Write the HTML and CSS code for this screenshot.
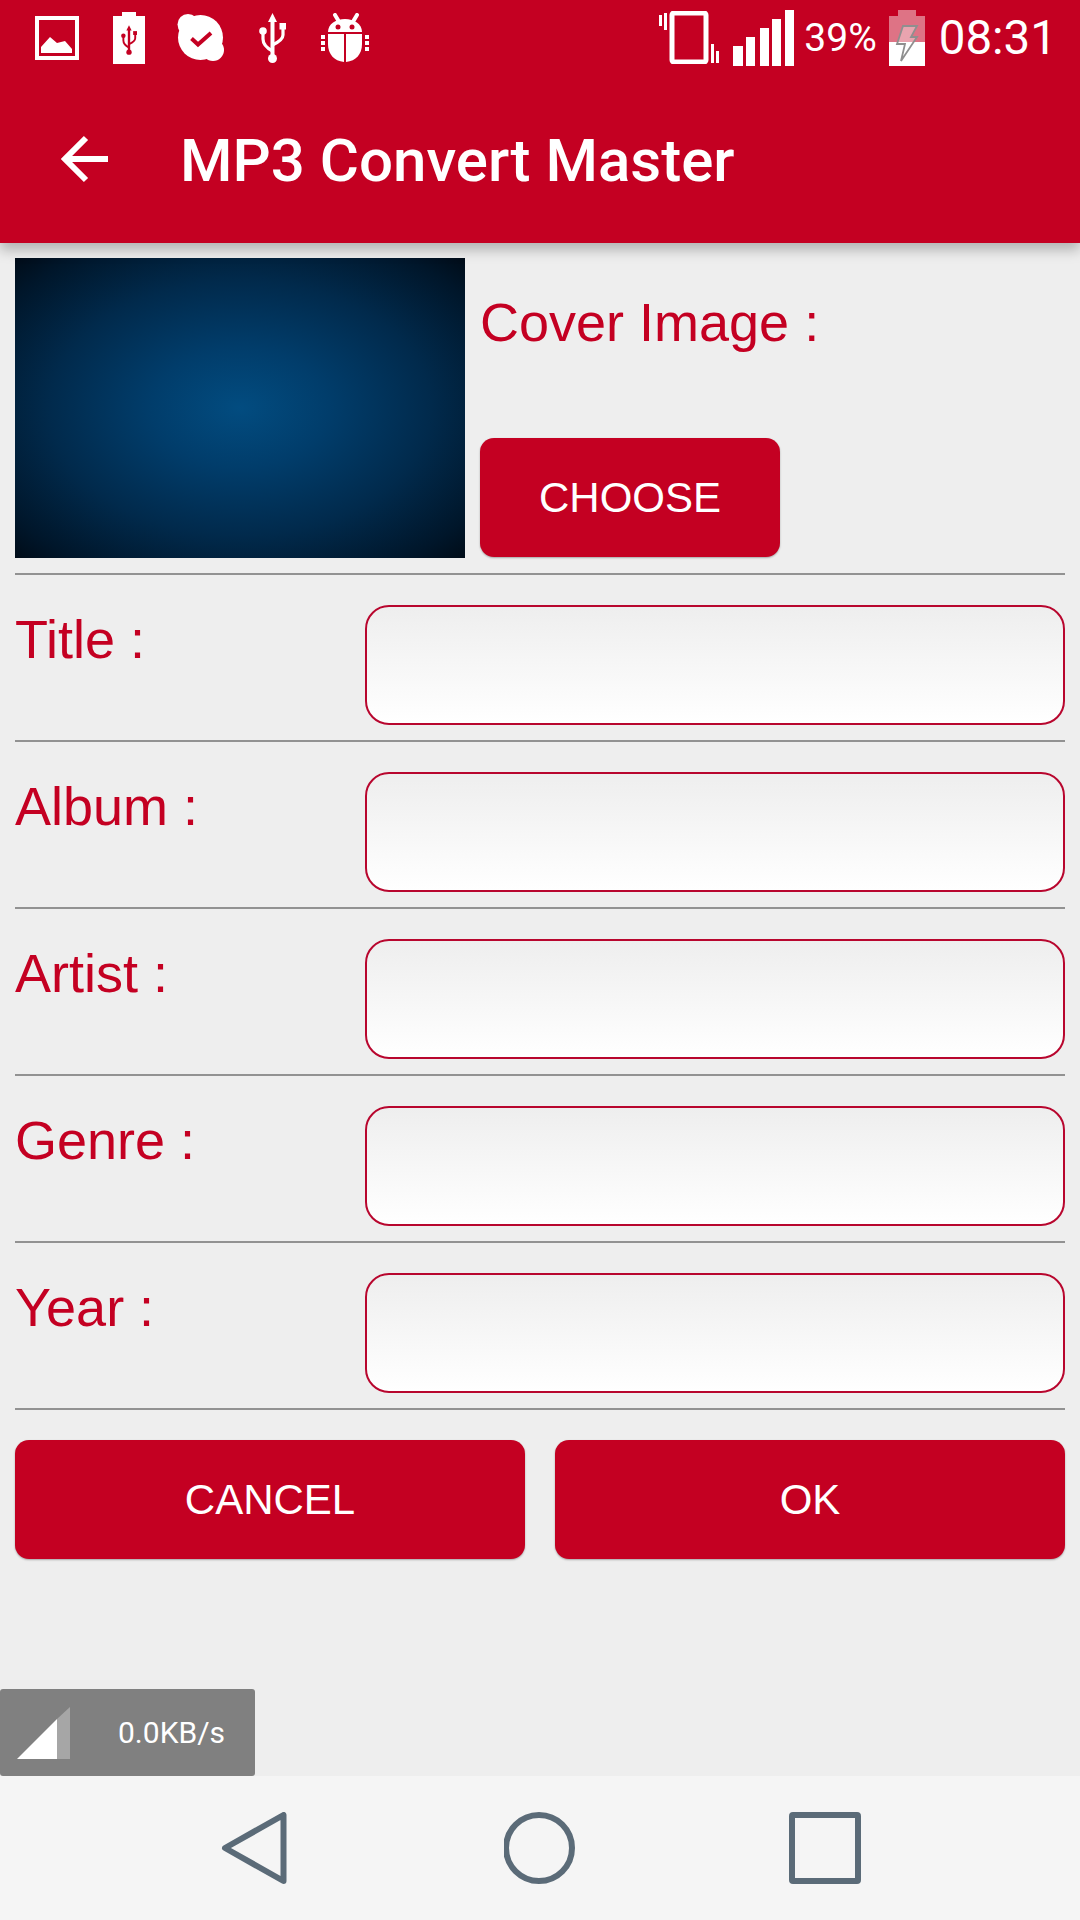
FILE: index.html
```html
<!DOCTYPE html>
<html>
<head>
    <title>MP3 Convert Master</title>
    <link rel="stylesheet" href="styles.css">
</head>
<body>
    <svg class="defs" width="0" height="0">
        <symbol id="usb" viewBox="0 0 27 50">
            <path d="M13.5 0L18 9H15.500V46H11.500V9H9Z" fill="currentColor"/>
            <circle cx="13.5" cy="45.5" r="4.5" fill="currentColor"/>
            <circle cx="4" cy="18" r="3.8" fill="currentColor"/>
            <rect x="20.500" y="10" width="6.500" height="6.500" fill="currentColor"/>
            <path d="M4 18V26Q4 33 13.5 38M24 14V22Q24 27 13.5 32" fill="none" stroke="currentColor" stroke-width="3.200"/>
        </symbol>
    </svg>

    <!-- Status bar and toolbar -->
    <header class="app-head">
        <div class="status-bar">
            <div class="status-left">
                <svg class="ic-image" viewBox="0 0 44 44">
                    <rect x="2" y="2" width="40" height="40" fill="none" stroke="#fff" stroke-width="4"/>
                    <path d="M6 37V31L15 21L22 27L30 25L37 33V37Z" fill="#fff"/>
                </svg>
                <svg class="ic-usb-battery" viewBox="0 0 32 52">
                    <rect x="9" y="0" width="14" height="5" fill="#fff"/>
                    <rect x="0" y="4" width="32" height="48" fill="#fff"/>
                    <use href="#usb" x="8" y="12" width="16" height="32" color="#c40022"/>
                </svg>
                <svg class="ic-skype" viewBox="0 0 47 47">
                    <circle cx="23.500" cy="23.500" r="22.500" fill="#fff"/>
                    <circle cx="11" cy="10.500" r="10.500" fill="#fff"/>
                    <circle cx="36" cy="36" r="11" fill="#fff"/>
                    <path d="M14.5 24.500L21 30.500L34 19" fill="none" stroke="#c40022" stroke-width="4"/>
                </svg>
                <svg class="ic-usb"><use href="#usb" width="27" height="50" color="#fff"/></svg>
                <svg class="ic-bug" viewBox="0 0 48 49">
                    <path d="M14 2L20 12M36 2L30 12" stroke="#fff" stroke-width="4" stroke-linecap="round"/>
                    <path d="M7 19C7 11 15 6 24 6C33 6 41 11 41 19Z" fill="#fff"/>
                    <circle cx="17" cy="14" r="2.500" fill="#c40022"/>
                    <circle cx="31" cy="14" r="2.500" fill="#c40022"/>
                    <path d="M7 21H23V49C13 48 7 41 7 31Z" fill="#fff"/>
                    <path d="M41 21H25V49C35 48 41 41 41 31Z" fill="#fff"/>
                    <path d="M0 22H4V26H0ZM0 28H4V32H0ZM0 34H4V38H0ZM44 22H48V26H44ZM44 28H48V32H44ZM44 34H48V38H44Z" fill="#fff"/>
                </svg>
            </div>
            <div class="status-right">
                <svg class="ic-vibrate" viewBox="0 0 60 53">
                    <rect x="13" y="2" width="34" height="49" rx="2" fill="none" stroke="#fff" stroke-width="5"/>
                    <path d="M0 4H3V15H0ZM5 2H8V19H5ZM52 33H55V52H52ZM57 40H60V52H57Z" fill="#fff"/>
                </svg>
                <svg class="ic-signal" viewBox="0 0 61 56">
                    <path d="M0 36H10V56H0ZM13 27H22V56H13ZM27 18H36V56H27ZM39 9H48V56H39ZM52 0H61V56H52Z" fill="#fff"/>
                </svg>
                <span class="battery-text">39%</span>
                <svg class="ic-battery" viewBox="0 0 36 56">
                    <path d="M9 0H27V6H36V32H0V6H9Z" fill="#fff" fill-opacity="0.45"/>
                    <rect x="0" y="32" width="36" height="24" fill="#fff"/>
                    <path d="M14 16H28L22 27H28L12 51L16 34H8Z" fill="#fff" fill-opacity="0.35" stroke="#8f8f8f" stroke-width="1.800"/>
                </svg>
                <span class="clock">08:31</span>
            </div>
        </div>
        <div class="toolbar">
            <svg class="ic-back" viewBox="0 0 47 48">
                <path d="M47 24H5M25 3L4 24L25 45" fill="none" stroke="#fff" stroke-width="6"/>
            </svg>
            <h1 class="app-title">MP3 Convert Master</h1>
        </div>
    </header>

    <!-- Tag form -->
    <main class="tag-form">
        <div class="cover-row">
            <div class="cover-image"></div>
            <div class="cover-side">
                <div class="cover-label">Cover Image :</div>
                <button class="red-btn choose-btn">CHOOSE</button>
            </div>
        </div>
        <div class="field-row">
            <label class="field-label">Title :</label>
            <div class="field-input"></div>
        </div>
        <div class="field-row">
            <label class="field-label">Album :</label>
            <div class="field-input"></div>
        </div>
        <div class="field-row">
            <label class="field-label">Artist :</label>
            <div class="field-input"></div>
        </div>
        <div class="field-row">
            <label class="field-label">Genre :</label>
            <div class="field-input"></div>
        </div>
        <div class="field-row">
            <label class="field-label">Year :</label>
            <div class="field-input"></div>
        </div>
        <div class="action-row">
            <button class="red-btn action-btn">CANCEL</button>
            <button class="red-btn action-btn">OK</button>
        </div>
    </main>

    <!-- Net speed overlay -->
    <div class="net-speed">
        <svg class="ic-net" viewBox="0 0 53 52">
            <path d="M40 12V52H53V0Z" fill="#fff" fill-opacity="0.3"/>
            <path d="M0 52H40V12Z" fill="#fff"/>
        </svg>
        <span class="net-text">0.0KB/s</span>
    </div>

    <!-- Android navigation bar -->
    <nav class="nav-bar">
        <svg class="nav-icon" viewBox="0 0 72 72">
            <path d="M64.500 3V69L6 36Z" fill="none" stroke="#5b6b78" stroke-width="6" stroke-linejoin="round"/>
        </svg>
        <svg class="nav-icon" viewBox="0 0 72 72">
            <circle cx="35" cy="36" r="33" fill="none" stroke="#5b6b78" stroke-width="6"/>
        </svg>
        <svg class="nav-icon" viewBox="0 0 72 72">
            <rect x="3" y="3" width="66" height="66" rx="1" fill="none" stroke="#5b6b78" stroke-width="6" stroke-linejoin="round"/>
        </svg>
    </nav>
</body>
</html>
```

FILE: styles.css
```css
html, body {
    margin: 0;
    padding: 0;
}

body {
    position: relative;
    display: flex;
    flex-direction: column;
    width: 1080px;
    height: 1920px;
    overflow: hidden;
    background-color: #eeeeee;
    font-family: "Liberation Sans", Arial, sans-serif;
}

.defs {
    position: absolute;
}

svg {
    display: block;
    flex: none;
}

/* Header */
.app-head {
    position: relative;
    z-index: 1;
    height: 243px;
    background-color: #c40022;
    box-shadow: 0 7px 12px rgba(0,0,0,0.25);
    font-family: Roboto, sans-serif;
    color: #fff;
}

.status-bar {
    display: flex;
    justify-content: space-between;
    align-items: center;
    height: 75px;
    padding: 0 23px 0 35px;
}

.status-left, .status-right {
    display: flex;
    align-items: center;
}

.ic-image { width: 44px; height: 44px; margin-right: 34px; margin-top: 1px; }
.ic-usb-battery { width: 32px; height: 52px; margin-right: 32px; }
.ic-skype { width: 47px; height: 47px; margin-right: 35px; }
.ic-usb { width: 27px; height: 50px; margin-right: 35px; }
.ic-bug { width: 48px; height: 49px; }

.ic-vibrate { width: 60px; height: 53px; margin-right: 14px; }
.ic-signal { width: 61px; height: 56px; margin-right: 10px; }
.ic-battery { width: 36px; height: 56px; margin: 0 14px 0 12px; }

.battery-text {
    font-size: 39px;
}

.clock {
    font-size: 47.5px;
}

.toolbar {
    display: flex;
    align-items: center;
    height: 168px;
    padding-left: 61px;
}

.ic-back {
    width: 47px;
    height: 48px;
    margin-right: 72px;
}

.app-title {
    margin: 2px 0 0;
    font-size: 60px;
    font-weight: 500;
}

/* Form */
.tag-form {
    padding: 15px 15px 0;
}

.cover-row {
    display: flex;
    height: 300px;
    padding-bottom: 15px;
    border-bottom: 2px solid #929292;
}

.cover-image {
    width: 450px;
    background: radial-gradient(ellipse at center, #024c80 0%, #013d6b 28%, #012a4c 60%, #00162a 88%, #000c18 100%);
}

.cover-side {
    display: flex;
    flex-direction: column;
    align-items: flex-start;
    justify-content: space-between;
    margin-left: 15px;
}

.cover-label, .field-label {
    font-size: 54px;
    color: #c40022;
}

.cover-label {
    margin-top: 33px;
}

.red-btn {
    padding: 0;
    border: none;
    border-radius: 14px;
    background-color: #c40022;
    box-shadow: 0 1px 2px rgba(0,0,0,0.3);
    font-family: "Liberation Sans", Arial, sans-serif;
    font-size: 42px;
    color: #fff;
}

.choose-btn {
    width: 300px;
    height: 119px;
    margin-bottom: 1px;
}

.field-row {
    display: flex;
    padding: 30px 0 15px;
    border-bottom: 2px solid #929292;
}

.field-label {
    width: 350px;
    margin-top: 3px;
}

.field-input {
    flex: 1;
    box-sizing: border-box;
    height: 120px;
    border: 2.5px solid #b8062e;
    border-radius: 24px;
    background: linear-gradient(#eeeeee, #ffffff);
}

.action-row {
    display: flex;
    gap: 30px;
    margin-top: 30px;
}

.action-btn {
    flex: 1;
    height: 119px;
}

/* Overlay */
.net-speed {
    position: absolute;
    left: 0;
    bottom: 144px;
    display: flex;
    align-items: center;
    box-sizing: border-box;
    width: 255px;
    height: 87px;
    padding-left: 17px;
    border-radius: 3px;
    background-color: #808080;
    font-family: Roboto, sans-serif;
    color: #fff;
}

.ic-net {
    width: 53px;
    height: 52px;
    margin: 1px 48px 0 0;
}

.net-text {
    font-size: 30px;
}

/* Navigation */
.nav-bar {
    display: flex;
    justify-content: center;
    align-items: center;
    gap: 213px;
    height: 144px;
    margin-top: auto;
    background-color: #f5f5f5;
}

.nav-icon {
    width: 72px;
    height: 72px;
}
```
